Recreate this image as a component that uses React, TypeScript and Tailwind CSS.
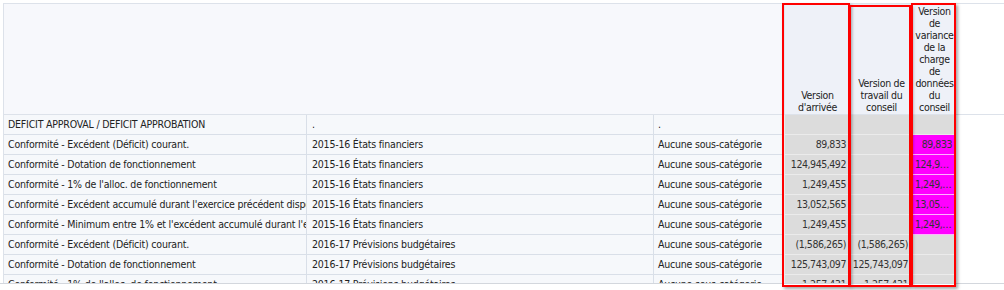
import React from 'react';

type Row = {
  label: string;
  source: string;
  sub: string;
  arrival: string;
  work: string;
  variance: string;
  flagged?: boolean;
};

const rows: Row[] = [
  { label: 'DEFICIT APPROVAL / DEFICIT APPROBATION', source: '.', sub: '.', arrival: '', work: '', variance: '' },
  { label: 'Conformité - Excédent (Déficit) courant.', source: '2015-16 États financiers', sub: 'Aucune sous-catégorie', arrival: '89,833', work: '', variance: '89,833', flagged: true },
  { label: 'Conformité - Dotation de fonctionnement', source: '2015-16 États financiers', sub: 'Aucune sous-catégorie', arrival: '124,945,492', work: '', variance: '124,945,492', flagged: true },
  { label: "Conformité - 1% de l'alloc. de fonctionnement", source: '2015-16 États financiers', sub: 'Aucune sous-catégorie', arrival: '1,249,455', work: '', variance: '1,249,455', flagged: true },
  { label: "Conformité - Excédent accumulé durant l'exercice précédent disponible", source: '2015-16 États financiers', sub: 'Aucune sous-catégorie', arrival: '13,052,565', work: '', variance: '13,052,565', flagged: true },
  { label: "Conformité - Minimum entre 1% et l'excédent accumulé durant l'exercice précédent", source: '2015-16 États financiers', sub: 'Aucune sous-catégorie', arrival: '1,249,455', work: '', variance: '1,249,455', flagged: true },
  { label: 'Conformité - Excédent (Déficit) courant.', source: '2016-17 Prévisions budgétaires', sub: 'Aucune sous-catégorie', arrival: '(1,586,265)', work: '(1,586,265)', variance: '' },
  { label: 'Conformité - Dotation de fonctionnement', source: '2016-17 Prévisions budgétaires', sub: 'Aucune sous-catégorie', arrival: '125,743,097', work: '125,743,097', variance: '' },
  { label: "Conformité - 1% de l'alloc. de fonctionnement", source: '2016-17 Prévisions budgétaires', sub: 'Aucune sous-catégorie', arrival: '1,257,431', work: '1,257,431', variance: '' },
];

const grid = 'grid grid-cols-[303px_347px_130px_66px_62px_44px]';

const HeaderCell: React.FC<{ lines: string[] }> = ({ lines }) => (
  <div className="flex flex-col justify-end items-center bg-[#eef1f8] border-l border-[#e2e6ee] pb-[1px] text-center leading-[12px] tracking-[-0.3px] text-[#222]">
    {lines.map((l, i) => (
      <span key={i} className="whitespace-nowrap">{l}</span>
    ))}
  </div>
);

const App: React.FC = () => {
  return (
    <div className="relative w-[1004px] h-[290px] bg-white overflow-hidden font-['DejaVu_Sans',sans-serif] [font-stretch:condensed] text-[10.5px] tracking-[-0.2px] text-[#222]">
      <div className="pt-[3px] h-[283px] flex flex-col">
        <div className="ml-[3px] flex-1 border-t border-l border-[#dde2ea] overflow-hidden">
          {/* header */}
          <div className={`${grid} h-[111px] border-b border-[#dde2ea]`}>
            <div className="col-span-3 bg-[#f7f8fc]" />
            <HeaderCell lines={['Version', "d'arrivée"]} />
            <HeaderCell lines={['Version de', 'travail du', 'conseil']} />
            <HeaderCell lines={['Version', 'de', 'variance', 'de la', 'charge', 'de', 'données', 'du', 'conseil']} />
          </div>
          {/* body */}
          {rows.map((r, i) => (
            <div key={i} className={`${grid} h-[20px]`}>
              <div className="bg-[#f6f8fb] border-b border-r border-[#d9dfe8] pl-[4px] leading-[19px] whitespace-nowrap overflow-hidden">{r.label}</div>
              <div className="bg-[#f6f8fb] border-b border-r border-[#d9dfe8] pl-[5px] leading-[19px] whitespace-nowrap overflow-hidden">{r.source}</div>
              <div className="bg-[#f6f8fb] border-b border-[#d9dfe8] pl-[4px] leading-[19px] whitespace-nowrap overflow-hidden">{r.sub}</div>
              <div className="bg-[#dcdcdc] border-b border-l border-[#ebebeb] pr-[4px] text-right leading-[19px] tracking-[-0.45px] text-[#333] whitespace-nowrap overflow-hidden">{r.arrival}</div>
              <div className="bg-[#dcdcdc] border-b border-l border-[#ebebeb] pr-[4px] text-right leading-[19px] tracking-[-0.45px] text-[#333] whitespace-nowrap overflow-hidden">{r.work}</div>
              <div
                className={`${r.flagged ? 'bg-[#ff00ff] border-[#ffb3ff]' : 'bg-[#dcdcdc] border-[#ebebeb]'} border-b border-l pl-[2px] pr-[4px] text-right leading-[19px] tracking-[-0.45px] text-[#333] truncate`}
              >
                {r.variance}
              </div>
            </div>
          ))}
        </div>
      </div>
      <div className="border-t border-[#d3d7dd] h-[7px] bg-white" />

      {/* red highlight boxes */}
      <div className="absolute left-[782px] top-[3px] w-[68px] h-[284px] border-2 border-[#ff0000] shadow-[2px_2px_3px_rgba(0,0,0,0.35)]" />
      <div className="absolute left-[849px] top-[5px] w-[62px] h-[282px] border-2 border-[#ff0000] shadow-[2px_2px_3px_rgba(0,0,0,0.35)]" />
      <div className="absolute left-[911px] top-[3px] w-[45px] h-[284px] border-2 border-[#ff0000] shadow-[2px_2px_3px_rgba(0,0,0,0.35)]" />
    </div>
  );
};

export default App;
